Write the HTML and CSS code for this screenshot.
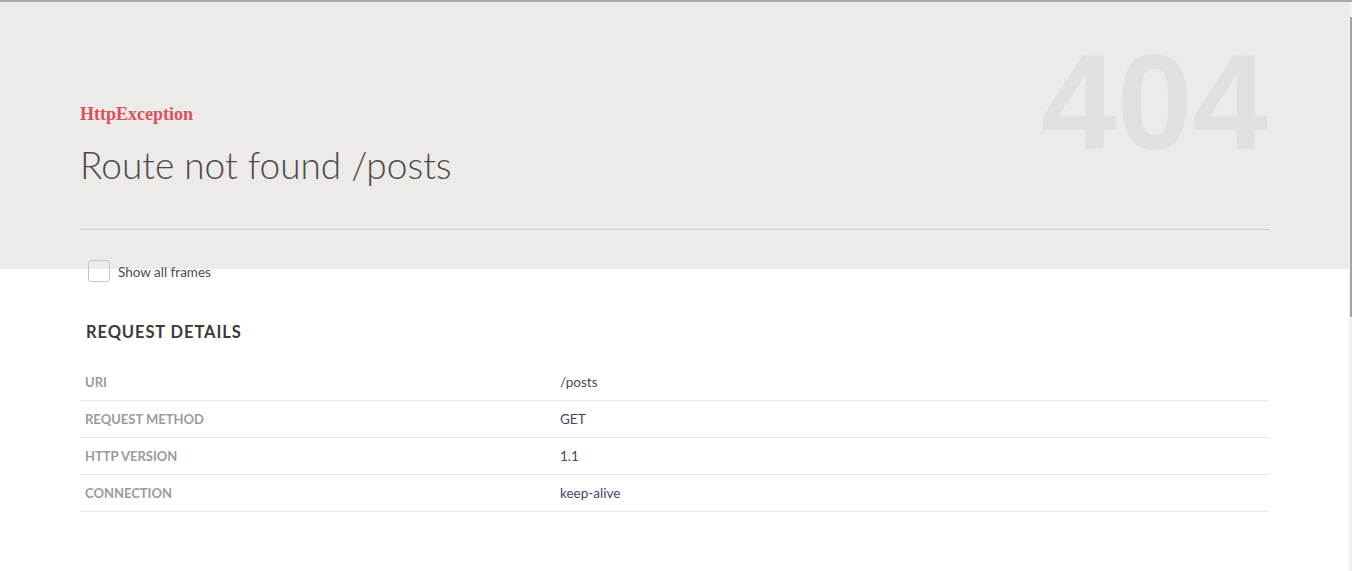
FILE: index.html
```html
<!DOCTYPE html>
<html lang="en">
<head>
<meta charset="utf-8">
<title>HttpException</title>
<link rel="stylesheet" href="styles.css">
</head>
<body>
<div class="page">
  <header class="hero">
    <div class="hero-top">
      <div class="titles">
        <h1 class="error-name">HttpException</h1>
        <p class="error-message">Route not found /posts</p>
      </div>
      <div class="status-code">404</div>
    </div>
    <div class="divider"></div>
  </header>

  <div class="frames-toggle">
    <span class="checkbox"></span>
    <span class="toggle-label">Show all frames</span>
  </div>

  <section class="details">
    <h2 class="details-title">REQUEST DETAILS</h2>
    <table class="details-table">
      <tr><td class="key">URI</td><td class="value">/posts</td></tr>
      <tr><td class="key">REQUEST METHOD</td><td class="value">GET</td></tr>
      <tr><td class="key">HTTP VERSION</td><td class="value">1.1</td></tr>
      <tr><td class="key">CONNECTION</td><td class="value">keep-alive</td></tr>
    </table>
  </section>
</div>
<div class="scrollbar"><div class="scrollbar-thumb"></div></div>
</body>
</html>
```

FILE: styles.css
```css
html, body {
  margin: 0;
  padding: 0;
  background: #ffffff;
}

body {
  font-family: Lato, "Open Sans", sans-serif;
  color: #444;
  height: 571px;
  overflow: hidden;
}

.page {
  margin-right: 3px;
}

.hero {
  background: #ecebe9;
  border-top: 2px solid #a9a9a9;
  padding: 0 80px;
  height: 267px;
}

.hero-top {
  display: flex;
  justify-content: space-between;
  align-items: flex-start;
  height: 227px;
}

.titles {
  padding-top: 101px;
}

.error-name {
  margin: 0;
  font-family: "Liberation Serif", serif;
  font-weight: bold;
  font-size: 18px;
  line-height: 22px;
  color: #df4f59;
}

.error-message {
  margin: 18px 0 0;
  font-family: Lato, sans-serif;
  font-weight: 300;
  font-size: 37px;
  line-height: 44px;
  color: #4a4a4a;
}

.status-code {
  margin-top: 32px;
  margin-right: 1px;
  font-family: "Liberation Sans", Arial, sans-serif;
  font-weight: bold;
  font-size: 136px;
  line-height: 136px;
  color: #e1e0df;
}

.divider {
  border-top: 1px solid #cdcccb;
}

.frames-toggle {
  display: flex;
  align-items: center;
  gap: 8px;
  margin-top: -9px;
  padding: 0 88px;
  height: 22px;
}

.checkbox {
  width: 22px;
  height: 22px;
  box-sizing: border-box;
  border: 1px solid #c6c6c6;
  border-radius: 3px;
}

.toggle-label {
  margin-top: 2px;
  font-size: 13.5px;
  color: #474c55;
}

.details {
  padding: 0 80px;
  margin-top: 40px;
}

.details-title {
  margin: 0;
  padding-left: 6px;
  font-size: 16.5px;
  line-height: 20px;
  font-weight: bold;
  letter-spacing: 0.9px;
  color: #3a3a3a;
}

.details-table {
  width: 100%;
  margin-top: 22px;
  border-collapse: collapse;
}

.details-table td {
  height: 36px;
  padding: 0;
  border-bottom: 1px solid #e6e6e6;
  font-size: 13px;
}

.details-table .key {
  width: 475px;
  padding-left: 5px;
  font-weight: bold;
  color: #9b9b9b;
}

.details-table .value {
  font-size: 13.5px;
  color: #3b4960;
}

.scrollbar {
  position: fixed;
  top: 0;
  right: 0;
  width: 3px;
  height: 100%;
  background: #f1f1f1;
  border-top: 2px solid #a9a9a9;
}

.scrollbar-thumb {
  margin-top: 15px;
  margin-left: 1px;
  width: 2px;
  height: 300px;
  background: #a3a3a3;
}
```
